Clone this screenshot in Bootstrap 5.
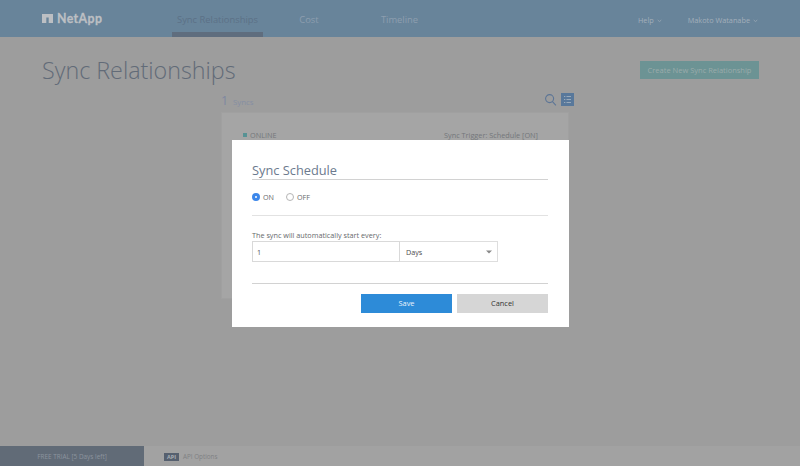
<!DOCTYPE html>
<html lang="en">
<head>
<meta charset="utf-8">
<meta name="viewport" content="width=device-width, initial-scale=1">
<title>Sync Relationships</title>
<link href="https://cdn.jsdelivr.net/npm/bootstrap@5.3.0/dist/css/bootstrap.min.css" rel="stylesheet">
<style>
body{font-family:"Open Sans","Noto Sans",sans-serif;font-size:7.2px;line-height:10px;background:#9d9d9d;color:#74777b;height:466px;overflow:hidden}
.topbar{height:37px;background:#68849a;color:#96a4b2;padding:3px 41px 0 41px}
.brand{width:131px;color:#bcbfc3;font:700 12.3px/14px Lato,sans-serif;letter-spacing:.4px;-webkit-text-stroke:.3px #bcbfc3;padding:9px 0 0 1px}
.brand svg{width:11px;height:9px;margin:2px 4px 0 0}
.tab{height:34px;padding-top:11px;font-size:9.4px;line-height:12px;color:#8d9eaf}
.tab-sync{width:91px;margin-right:1px;color:#5c7187;border-bottom:5px solid #5f6d7e}
.tab-cost{width:90px}
.tab-time{width:91px}
.user-nav{font-size:7.3px;color:#a3afba}
.user-nav svg{width:5px;height:4px;margin-left:3px}
.user-name{margin-left:26px;margin-right:1px}
.page-title{font-size:23.3px;line-height:32px;font-weight:300;color:#626b78;margin:0 0 0 1px}
.title-row{padding:17px 41px 0 41px}
.create-btn{width:119px;height:18px;margin-top:7px;border:0;border-radius:0;padding:0;font-size:7.5px;line-height:18px;background:#6c9394;color:#9babab}
.sync-list{width:353px;margin-left:221px}
.count-row{height:26px;padding-top:7px}
.count-num{font-size:12.5px;line-height:16px;width:12px;color:#7e88a1}
.count-word{font-size:7.8px;margin-top:4px;color:#858ea3}
.sync-panel{width:348px;height:187px;background:#a5a5a5;border:1px solid #a0a0a0;padding:17px 30px 0 21px;font-size:7.3px}
.dot{width:4px;height:4px;background:#579294;margin-right:3px}
.foot{height:20px;background:#a2a2a2}
.trial{width:144px;background:#616b77;color:#8c949e;font-size:6.4px;padding-top:1px}
.api-tag{width:15px;height:8px;background:#56606f;color:#aaafb5;font:700 5.5px/8px "Open Sans",sans-serif;margin:2px 4px 0 20px}
.api-text{font-size:6.3px;color:#7f8183;padding-top:2px}
.modal{color:#66686b}
.modal-dialog{width:337px;max-width:337px;margin:140px 0 0 232px}
.modal-content{height:187px;border:0;border-radius:0;padding:19px 21px 0 20px;background:#fff}
.modal-title{font-size:12.8px;line-height:22px;height:20px;margin:0;font-weight:400;color:#6c7a8e}
.rule-dark{border-bottom:1px solid #d2d2d2}
.choices{height:36px;border-bottom:1px solid #e2e2e2;font-size:7.2px;padding-bottom:2px}
.choices .form-check-input{width:8px;height:8px;margin:0 3px 0 0;border:1px solid #b5b5b5;background-image:none;flex:none;float:none}
.choices .form-check-input:checked{border:3px solid #3c87ea;background:#fff}
.choices label{line-height:10px}
.choices .off-choice{margin-left:12px}
.every{font-size:7.25px;margin-top:14px;height:11px}
.fields{height:43px}
.fields .form-control{width:148px;height:21px;font-size:7.2px;line-height:10px;padding:0 4px;border:1px solid #d9d9d9;border-radius:0;color:#555}
.fields .pick{width:98px;height:21px;padding:0 5px 0 6px;border:1px solid #dedede;border-left-width:0;font-size:7.2px;color:#4d4d4d}
.pick svg{width:6px;height:4px}
.actions{gap:5px;margin-top:10px}
.actions .btn{width:91px;height:19px;padding:0;border:0;border-radius:0;font-size:7.4px;line-height:19px}
.actions .save{background:#2d8bd8;color:#e9f3fb}
.actions .cancel{background:#d6d6d6;color:#333}
</style>
<script src="https://cdn.jsdelivr.net/npm/bootstrap@5.3.0/dist/js/bootstrap.bundle.min.js"></script>
</head>
<body class="d-flex flex-column">
<header class="topbar d-flex">
  <div class="brand d-flex align-items-start">
    <svg viewBox="0 0 11 9" preserveAspectRatio="none"><path fill="currentColor" d="M0 0h11v9H6.7V3.4H4.3V9H0z"/></svg><span>NetApp</span>
  </div>
  <nav class="d-flex text-center">
    <div class="tab tab-sync">Sync Relationships</div>
    <div class="tab tab-cost">Cost</div>
    <div class="tab tab-time">Timeline</div>
  </nav>
  <div class="user-nav d-flex align-items-center ms-auto">
    <span>Help<svg viewBox="0 0 5 4"><path d="M.7 1l1.8 1.6L4.3 1" fill="none" stroke="currentColor" stroke-width=".7"/></svg></span>
    <span class="user-name">Makoto Watanabe<svg viewBox="0 0 5 4"><path d="M.7 1l1.8 1.6L4.3 1" fill="none" stroke="currentColor" stroke-width=".7"/></svg></span>
  </div>
</header>
<main class="flex-grow-1">
  <div class="title-row d-flex justify-content-between align-items-start">
    <h1 class="page-title">Sync Relationships</h1>
    <button class="btn create-btn">Create New Sync Relationship</button>
  </div>
  <section class="sync-list">
    <div class="count-row d-flex">
      <span class="count-num">1</span><span class="count-word">Syncs</span>
      <svg class="ms-auto" width="12" height="13" viewBox="0 0 12 13"><g fill="none" stroke="#5c7596" stroke-width="1.1"><circle cx="4.6" cy="5.6" r="4"/><path d="M7.5 8.6l3.4 3.7"/></g></svg>
      <svg width="13" height="13" viewBox="0 0 13 13" class="ms-1 list-icon"><path fill="#58789b" d="M0 0h13v13H0z"/><path stroke="#9aaaba" d="M3 3.5h1.3M5.5 3.5H10M3 6.5h1.3M5.5 6.5H10M3 9.5h1.3M5.5 9.5H10"/></svg>
    </div>
    <div class="sync-panel d-flex justify-content-between align-items-start">
      <span class="d-flex align-items-center"><i class="dot"></i>ONLINE</span>
      <span>Sync Trigger: Schedule [ON]</span>
    </div>
  </section>
</main>
<footer class="foot d-flex align-items-stretch">
  <div class="trial d-flex align-items-center justify-content-center">FREE TRIAL [5 Days left]</div>
  <div class="d-flex align-items-center"><span class="api-tag text-center">API</span><span class="api-text">API Options</span></div>
</footer>
<div class="modal d-block" role="dialog" aria-labelledby="scheduleTitle">
  <div class="modal-dialog">
    <div class="modal-content">
      <div class="rule-dark"><h2 class="modal-title" id="scheduleTitle">Sync Schedule</h2></div>
      <div class="choices d-flex align-items-center">
        <label class="d-flex align-items-center"><input class="form-check-input" type="radio" name="sched" checked>ON</label>
        <label class="d-flex align-items-center off-choice"><input class="form-check-input" type="radio" name="sched">OFF</label>
      </div>
      <div class="every">The sync will automatically start every:</div>
      <div class="fields rule-dark d-flex align-items-start">
        <input class="form-control" type="text" value="1" aria-label="Interval">
        <div class="pick d-flex align-items-center justify-content-between"><span>Days</span><svg viewBox="0 0 6 4"><path fill="#888" d="M0 .5h6L3 3.5z"/></svg></div>
      </div>
      <div class="actions d-flex justify-content-end">
        <button class="btn save">Save</button>
        <button class="btn cancel">Cancel</button>
      </div>
    </div>
  </div>
</div>
</body>
</html>
